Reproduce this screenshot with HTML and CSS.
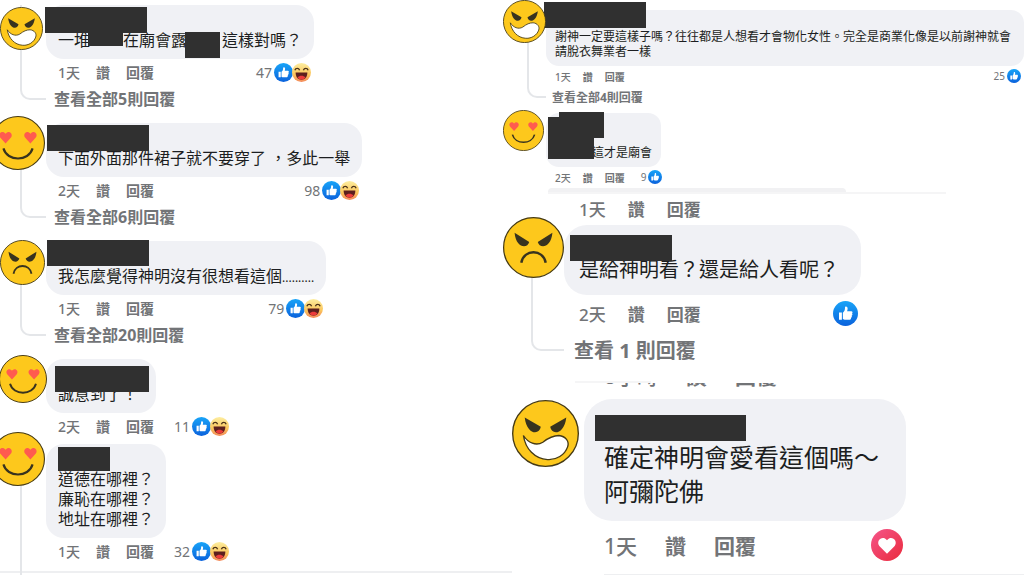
FILE: index.html
```
<!DOCTYPE html>
<html lang="zh-Hant">
<head>
    <meta charset="UTF-8">
    <meta name="viewport" content="width=device-width, initial-scale=1.0">
    <title>留言</title>
    <link rel="stylesheet" href="styles.css">
</head>
<body>
    <svg class="sprite" aria-hidden="true">
        <defs>
            <linearGradient id="like-bg" x1="0" y1="0" x2="0" y2="1">
                <stop offset="0" stop-color="#18a4f8"/>
                <stop offset="1" stop-color="#0b62dc"/>
            </linearGradient>
            <linearGradient id="haha-bg" x1="0" y1="0" x2="0" y2="1">
                <stop offset="0" stop-color="#fdeea0"/>
                <stop offset="0.6" stop-color="#fbc65c"/>
                <stop offset="1" stop-color="#f3885b"/>
            </linearGradient>
            <linearGradient id="love-bg" x1="0" y1="0" x2="1" y2="1">
                <stop offset="0" stop-color="#f5558a"/>
                <stop offset="1" stop-color="#ea2b3c"/>
            </linearGradient>
        </defs>
        <symbol id="grin" viewBox="0 0 100 100">
            <circle cx="50" cy="50" r="49" fill="#fdc81c" stroke="#453a14" stroke-width="2"/>
            <path d="M19 26 L43 40 C41 53 22 52 19 26Z M81 26 L57 40 C59 53 78 52 81 26Z" fill="#38331f"/>
            <path d="M17 53 C24 64 36 69 46 63 C55 56 62 53 70 53 C80 54 86 62 83 70 C79 82 66 90 53 89 C34 88 20 73 17 53Z" fill="#fff" stroke="#453a14" stroke-width="2"/>
        </symbol>
        <symbol id="frown" viewBox="0 0 100 100">
            <circle cx="50" cy="50" r="49" fill="#fdc81c" stroke="#453a14" stroke-width="2"/>
            <path d="M19 26 L43 41 C40 53 21 51 19 26Z M81 26 L57 41 C60 53 79 51 81 26Z" fill="#38331f"/>
            <path d="M30 75 C34 52 66 52 70 75" fill="none" stroke="#38331f" stroke-width="4"/>
        </symbol>
        <symbol id="adore" viewBox="0 0 100 100">
            <circle cx="50" cy="50" r="49" fill="#fdc81c" stroke="#453a14" stroke-width="2"/>
            <path d="M27 51 L17 40 C12 33 21 25 27 33 C33 25 42 33 37 40Z M73 51 L63 40 C58 33 67 25 73 33 C79 25 88 33 83 40Z" fill="#ff5b4f"/>
            <path d="M23 60 C30 85 70 85 77 60" fill="none" stroke="#38331f" stroke-width="4"/>
        </symbol>
        <symbol id="like" viewBox="0 0 20 20">
            <circle cx="10" cy="10" r="10" fill="url(#like-bg)"/>
            <path d="M4.8 9.2h2.3v5.8H4.8z M7.9 9.3 C9.3 8.2 9.6 7 9.6 5.2 C9.6 3.9 11.9 4.1 11.7 6.4 L11.3 8.2 H14.6 C15.9 8.2 15.8 9.6 15.2 10 C15.8 10.5 15.6 11.5 14.9 11.7 C15.3 12.3 15 13.1 14.4 13.3 C14.6 14.3 14 15 13 15 H10 C9 15 8.5 14.7 7.9 14.4Z" fill="#fff"/>
        </symbol>
        <symbol id="haha" viewBox="0 0 20 20">
            <circle cx="10" cy="10" r="10" fill="url(#haha-bg)"/>
            <path d="M3 7.6 C4 5 7 5 8 7.6 M12 7.6 C13 5 16 5 17 7.6" fill="none" stroke="#4a3018" stroke-width="1.4"/>
            <path d="M3.8 10 H16.2 C16 15.4 13.6 17.6 10 17.6 C6.4 17.6 4 15.4 3.8 10Z" fill="#5c1f1e"/>
            <path d="M5.8 15 C8 12.8 12 12.8 14.2 15 C12.6 18.2 7.4 18.2 5.8 15Z" fill="#ec3b3b"/>
        </symbol>
        <symbol id="love" viewBox="0 0 20 20">
            <circle cx="10" cy="10" r="10" fill="url(#love-bg)"/>
            <path d="M10 15.4 L5.2 10.6 C2.9 7.6 7 3.6 10 7 C13 3.6 17.1 7.6 14.8 10.6Z" fill="#fff"/>
        </symbol>
    </svg>

    <main class="board">
        <section class="column">
            <article class="comment c1 has-replies">
                <svg class="avatar"><use href="#grin"/></svg>
                <div class="thread"></div>
                <div class="content">
                    <div class="bubble">
                        <div class="name"></div>
                        <span class="mask"></span>
                        <p>一堆<span class="word"></span>在廟會露<span class="word tall"></span>這樣對嗎？</p>
                    </div>
                    <div class="actions">
                        <span>1天</span><button>讚</button><button>回覆</button>
                        <div class="reactions">47<svg><use href="#like"/></svg><svg><use href="#haha"/></svg></div>
                    </div>
                    <a class="replies" href="#">查看全部5則回覆</a>
                </div>
            </article>

            <article class="comment c2 has-replies">
                <svg class="avatar"><use href="#adore"/></svg>
                <div class="thread"></div>
                <div class="content">
                    <div class="bubble">
                        <div class="name"></div>
                        <span class="mask"></span>
                        <p>下面外面那件裙子就不要穿了 ，多此一舉</p>
                    </div>
                    <div class="actions">
                        <span>2天</span><button>讚</button><button>回覆</button>
                        <div class="reactions">98<svg><use href="#like"/></svg><svg><use href="#haha"/></svg></div>
                    </div>
                    <a class="replies" href="#">查看全部6則回覆</a>
                </div>
            </article>

            <article class="comment c3 has-replies">
                <svg class="avatar"><use href="#frown"/></svg>
                <div class="thread"></div>
                <div class="content">
                    <div class="bubble">
                        <div class="name"></div>
                        <span class="mask"></span>
                        <p>我怎麼覺得神明沒有很想看這個<span class="dots">..........</span></p>
                    </div>
                    <div class="actions">
                        <span>1天</span><button>讚</button><button>回覆</button>
                        <div class="reactions">79<svg><use href="#like"/></svg><svg><use href="#haha"/></svg></div>
                    </div>
                    <a class="replies" href="#">查看全部20則回覆</a>
                </div>
            </article>

            <article class="comment c4">
                <svg class="avatar"><use href="#adore"/></svg>
                <div class="content">
                    <div class="bubble">
                        <div class="name"></div>
                        <span class="mask"></span>
                        <p>誠意到了！</p>
                    </div>
                    <div class="actions">
                        <span>2天</span><button>讚</button><button>回覆</button>
                        <div class="reactions">11<svg><use href="#like"/></svg><svg><use href="#haha"/></svg></div>
                    </div>
                </div>
            </article>

            <article class="comment c5">
                <svg class="avatar"><use href="#adore"/></svg>
                <div class="thread open"></div>
                <div class="content">
                    <div class="bubble">
                        <div class="name"></div>
                        <span class="mask"></span>
                        <p>道德在哪裡？<br>廉恥在哪裡？<br>地址在哪裡？</p>
                    </div>
                    <div class="actions">
                        <span>1天</span><button>讚</button><button>回覆</button>
                        <div class="reactions">32<svg><use href="#like"/></svg><svg><use href="#haha"/></svg></div>
                    </div>
                </div>
            </article>
            <hr>
        </section>

        <section class="column right">
            <article class="comment small c6 has-replies">
                <svg class="avatar"><use href="#grin"/></svg>
                <div class="thread"></div>
                <div class="content">
                    <div class="bubble">
                        <div class="name"></div>
                        <span class="mask"></span>
                        <p>謝神一定要這樣子嗎？往往都是人想看才會物化女性。完全是商業化像是以前謝神就會請脫衣舞業者一樣</p>
                    </div>
                    <div class="actions">
                        <span>1天</span><button>讚</button><button>回覆</button>
                        <div class="reactions">25<svg><use href="#like"/></svg></div>
                    </div>
                    <a class="replies" href="#">查看全部4則回覆</a>
                </div>
            </article>

            <article class="comment small c7">
                <svg class="avatar"><use href="#adore"/></svg>
                <div class="content">
                    <div class="bubble">
                        <div class="name"></div>
                        <span class="mask"></span>
                        <span class="mask second"></span>
                        <p>這才是廟會</p>
                    </div>
                    <div class="actions">
                        <span>2天</span><button>讚</button><button>回覆</button>
                        <div class="reactions">9<svg><use href="#like"/></svg></div>
                    </div>
                </div>
            </article>

            <div class="cut-bubble"></div>
            <div class="actions large loose">
                <span>1天</span><button>讚</button><button>回覆</button>
            </div>

            <article class="comment large c8 has-replies">
                <svg class="avatar"><use href="#frown"/></svg>
                <div class="thread"></div>
                <div class="content">
                    <div class="bubble">
                        <div class="name"></div>
                        <span class="mask"></span>
                        <p>是給神明看？還是給人看呢？</p>
                    </div>
                    <div class="actions">
                        <span>2天</span><button>讚</button><button>回覆</button>
                        <div class="reactions"><svg><use href="#like"/></svg></div>
                    </div>
                    <a class="replies" href="#">查看 1 則回覆</a>
                </div>
            </article>

            <div class="cut-bubble short"></div>
            <div class="actions huge cut-row">
                <span>8小時</span><button>讚</button><button>回覆</button>
            </div>

            <article class="comment huge c9">
                <svg class="avatar"><use href="#grin"/></svg>
                <div class="content">
                    <div class="bubble">
                        <div class="name"></div>
                        <span class="mask"></span>
                        <p>確定神明會愛看這個嗎～<br>阿彌陀佛</p>
                    </div>
                    <div class="actions">
                        <span>1天</span><button>讚</button><button>回覆</button>
                        <div class="reactions"><svg><use href="#love"/></svg></div>
                    </div>
                </div>
            </article>
            <hr>
        </section>
    </main>
</body>
</html>
```
FILE: styles.css
```
* {
    box-sizing: border-box;
}
body {
    --gutter: 46px;
    --pad: 12px;
    --pad-right: 12px;
    --pad-top: 5px;
    --pad-bottom: 9px;
    --name: 20px;
    --font: 16px;
    --line: 20px;
    --radius: 18px;
    --action-font: 14px;
    --action-gap: 16px;
    --action-height: 26px;
    --icon: 19px;
    --reply-height: 29px;
    --reply-indent: 8px;
    --thread: 20px;
    margin: 0;
    background-color: #fff;
    color: #1c1e21;
    font-family: "Noto Sans", "Noto Sans CJK TC", sans-serif;
    overflow-x: hidden;
}
.small {
    --pad: 9px;
    --pad-right: 9px;
    --pad-top: 4px;
    --pad-bottom: 7px;
    --name: 15px;
    --font: 12px;
    --line: 15px;
    --radius: 13px;
    --action-font: 10px;
    --action-gap: 12px;
    --action-height: 20px;
    --icon: 14px;
    --reply-height: 23px;
    --reply-indent: 6px;
    --thread: 27px;
}
.large {
    --gutter: 64px;
    --pad: 15px;
    --pad-right: 22px;
    --pad-top: 8px;
    --pad-bottom: 13px;
    --name: 25px;
    --font: 20px;
    --line: 24px;
    --radius: 23px;
    --action-font: 17px;
    --action-gap: 22px;
    --action-height: 36px;
    --icon: 25px;
    --reply-height: 40px;
    --reply-indent: 10px;
    --thread: 31px;
}
.huge {
    --gutter: 84px;
    --pad: 20px;
    --pad-right: 27px;
    --pad-top: 9px;
    --pad-bottom: 13px;
    --name: 32px;
    --font: 25px;
    --line: 34px;
    --radius: 28px;
    --action-font: 21px;
    --action-gap: 28px;
    --action-height: 47px;
    --icon: 32px;
}
.sprite {
    position: absolute;
    width: 0;
    height: 0;
}
.board {
    display: grid;
    grid-template-columns: minmax(0, 500fr) minmax(0, 524fr);
}
.column {
    padding-top: 5px;
}
.column.right {
    padding-top: 10px;
}
.comment {
    position: relative;
    display: grid;
    grid-template-columns: var(--gutter) minmax(0, 1fr);
    margin-bottom: 6px;
}
.avatar {
    position: absolute;
    z-index: 1;
}
.thread {
    grid-column: 1;
    grid-row: 1;
    margin-left: var(--thread);
    margin-bottom: calc(var(--reply-height) / 2);
    border-left: 2px solid #e4e6e9;
    border-bottom: 2px solid #e4e6e9;
    border-bottom-left-radius: 10px;
}
.thread.open {
    margin-bottom: -13px;
    border-bottom: none;
    border-radius: 0;
}
.content {
    grid-column: 2;
    grid-row: 1;
    width: fit-content;
    display: flex;
    flex-direction: column;
    align-items: flex-start;
}
.bubble {
    position: relative;
    padding: var(--pad-top) var(--pad-right) var(--pad-bottom) var(--pad);
    border-radius: var(--radius);
    background-color: #f0f1f5;
}
.name {
    height: var(--name);
}
.bubble p {
    margin: 0;
    font-size: var(--font);
    line-height: var(--line);
}
.dots {
    font-size: 12px;
    line-height: 1;
}
.mask {
    position: absolute;
    width: 102px;
    height: 26px;
    background-color: #303030;
}
.word {
    display: inline-block;
    vertical-align: top;
    width: 35px;
    height: 13px;
    margin: 3px 0 0 -2px;
    background-color: #303030;
}
.word.tall {
    height: 26px;
    margin: 2px 2px -8px -2px;
}
.actions {
    display: flex;
    align-items: center;
    gap: var(--action-gap);
    min-width: 100%;
    height: var(--action-height);
    padding: 0 3px 0 var(--pad);
    color: #727477;
    font-size: var(--action-font);
    font-weight: 700;
    white-space: nowrap;
}
.actions span {
    font-weight: 500;
}
.actions button {
    padding: 0;
    border: none;
    background: none;
    color: inherit;
    font: inherit;
    cursor: pointer;
}
.reactions {
    display: flex;
    align-items: center;
    margin-left: auto;
    padding-left: 4px;
    font-weight: 400;
}
.reactions svg {
    width: var(--icon);
    height: var(--icon);
    margin-left: 2px;
}
.reactions svg + svg {
    margin-left: -1px;
}
.replies {
    height: var(--reply-height);
    padding-left: var(--reply-indent);
    color: #727477;
    font-size: var(--font);
    font-weight: 700;
    line-height: var(--reply-height);
    text-decoration: none;
}
.has-replies {
    margin-bottom: 9px;
}
hr {
    width: calc(100% + 12px);
    height: 2px;
    margin: 7px 0 0;
    border: none;
    background-color: #eeeff1;
}
.right hr {
    width: auto;
    height: 1px;
    margin: 0 0 0 104px;
}

/* avatars and name masks */
.c1 .avatar { left: 0; top: 2px; width: 43px; height: 43px; }
.c1 .mask { left: -1px; top: 2px; }
.c2 .avatar { left: -9px; top: -7px; width: 54px; height: 54px; }
.c2 .mask { left: 1px; top: 2px; }
.c3 .avatar { left: 0; top: -1px; width: 45px; height: 45px; }
.c3 .mask { left: 1px; top: -1px; }
.c4 .avatar { left: -1px; top: -4px; width: 48px; height: 48px; }
.c4 .mask { left: 9px; top: 7px; width: 94px; }
.c4 .bubble { min-width: 110px; }
.c5 .avatar { left: -9px; top: -12px; width: 54px; height: 54px; }
.c5 .mask { left: 12px; top: 3px; width: 52px; height: 24px; }
.c6 .avatar { left: 3px; top: -10px; width: 43px; height: 43px; }
.c6 .mask { left: -2px; top: -8px; }
.c7 .avatar { left: 3px; top: -3px; width: 41px; height: 41px; }
.c7 .mask { left: 13px; top: -1px; width: 45px; }
.c7 .mask.second { left: 2px; top: 4px; width: 46px; height: 42px; }
.c8 .avatar { left: 3px; top: -8px; width: 61px; height: 61px; }
.c8 .mask { left: 6px; top: 10px; }
.c9 .avatar { left: 12px; top: 1px; width: 67px; height: 67px; }
.c9 .mask { left: 11px; top: 16px; width: 151px; }

.c4 { margin-bottom: 5px; }
.c6 { margin-bottom: 4px; }
.c6 .content { width: auto; }
.c7 { margin-bottom: 1px; }
.c7 .name { height: 28px; }
.c7 p { padding-left: 37px; }
.c8 { margin-bottom: 10px; }

/* rows cropped by the next post */
.cut-bubble {
    width: 398px;
    height: 6px;
    margin-left: 48px;
    border-bottom: 2px solid #f5f5f6;
}
.cut-bubble::before {
    content: "";
    display: block;
    width: 298px;
    height: 4px;
    border-radius: 6px 6px 0 0;
    background-color: #f1f1f3;
}
.cut-bubble.short {
    width: 76px;
    height: 2px;
    margin-left: 75px;
}
.cut-bubble.short::before {
    display: none;
}
.loose {
    height: 28px;
    margin-bottom: 3px;
    padding-left: 79px;
}
.cut-row {
    align-items: flex-end;
    height: 5px;
    margin-bottom: 11px;
    padding-left: 104px;
    line-height: 24px;
    overflow: hidden;
}
```
